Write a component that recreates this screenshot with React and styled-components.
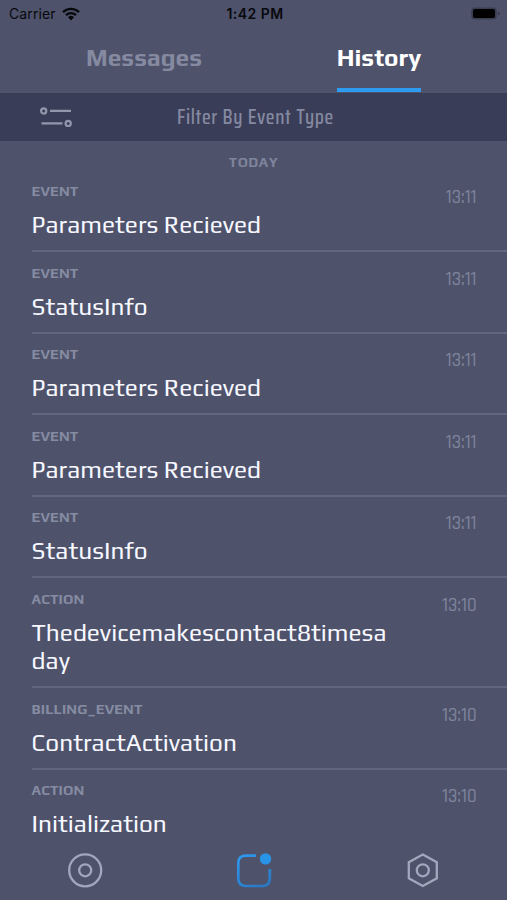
import React, {useState} from 'react';
import styled, {createGlobalStyle} from 'styled-components';

const GlobalStyle = createGlobalStyle`
  body {
    margin: 0;
    background: #4e526b;
  }
  * {
    box-sizing: border-box;
  }
`;

const Screen = styled.div`
  display: flex;
  flex-direction: column;
  height: 900px;
  overflow: hidden;
  background: #4e526b;
  color: #f7f8ff;
  font-family: Play, 'Noto Sans', sans-serif;
`;

const StatusBar = styled.div`
  display: grid;
  grid-template-columns: 1fr auto 1fr;
  align-items: center;
  flex: none;
  height: 28px;
  padding: 0 6px 0 9px;
  color: #08090d;
  font: 400 14px/28px Inter, sans-serif;
`;
const Carrier = styled.div`
  display: flex;
  align-items: center;
  gap: 6px;
  letter-spacing: 0.1px;
`;
const Clock = styled.div`
  font-weight: 600;
  letter-spacing: 0.45px;
`;
const Battery = styled.div`
  display: flex;
  justify-content: flex-end;
`;

const Tabs = styled.div`
  display: flex;
  flex: none;
  height: 65px;
  padding-left: 32px;
`;
const TabSlot = styled.div`
  display: flex;
  justify-content: center;
  width: ${(props) => props.$width}px;
`;
const Tab = styled.button`
  height: 64px;
  padding: 0 0 2px;
  border: 0;
  border-bottom: 4px solid ${(props) => (props.$active ? '#2d9cf0' : 'transparent')};
  background: none;
  color: ${(props) => (props.$active ? '#ffffff' : '#858aa1')};
  font: 700 24.4px/58px Play, 'Noto Sans', sans-serif;
  white-space: nowrap;
`;

const FilterBar = styled.div`
  display: grid;
  grid-template-columns: 1fr auto 1fr;
  align-items: center;
  flex: none;
  height: 48px;
  padding: 0 35px 0 39px;
  background: #3a3d57;
  color: #858aa1;
  font: 500 20.5px/47px 'Saira Condensed', Roboto, sans-serif;
  letter-spacing: 0.65px;
`;

const List = styled.div`
  flex: 1;
  min-height: 0;
  overflow: hidden;
`;
const Day = styled.div`
  height: 29.8px;
  padding-top: 11px;
  color: #7e849b;
  font-size: 14px;
  font-weight: 600;
  line-height: 20px;
  letter-spacing: 0.5px;
  text-align: center;
`;
const Row = styled.div`
  display: flex;
  justify-content: space-between;
  margin-left: 31.6px;
  padding: 10.6px 30.4px 11.4px 0;
  border-bottom: 2px solid #62677f;
`;
const Kind = styled.div`
  color: #858ba1;
  font-size: 14.3px;
  font-weight: 600;
  line-height: 20px;
  letter-spacing: 0.12px;
`;
const Title = styled.div`
  width: 362px;
  margin-top: 9px;
  font-size: 24.4px;
  line-height: 28.5px;
  white-space: pre-line;
`;
const Time = styled.div`
  padding-top: 6px;
  color: #7e849b;
  font: 500 18.6px/22px Rajdhani, Roboto, sans-serif;
`;

const Nav = styled.div`
  display: flex;
  justify-content: space-around;
  align-items: center;
  flex: none;
  height: 60px;
`;

const WifiIcon = () => (
  <svg width="18" height="14" viewBox="0 0 18 14" fill="none" stroke="#08090d" strokeWidth="2.3">
    <path d="M1 5.1a11.5 11.5 0 0 1 16 0" />
    <path d="M4 8.2a7.2 7.2 0 0 1 10 0" />
    <path d="M9 13.4 6 10.3a4.3 4.3 0 0 1 6 0z" fill="#08090d" stroke="none" />
  </svg>
);

const BatteryIcon = () => (
  <svg width="30" height="14" viewBox="0 0 30 14">
    <rect x=".2" y=".4" width="25.6" height="12.2" rx="3.5" fill="#3b3e51" />
    <rect x="2" y="2" width="22" height="9" rx="1.8" fill="#000" />
    <path d="M27 4.5v4q1.6-.5 1.6-2t-1.6-2z" fill="#343749" />
  </svg>
);

const FilterIcon = () => (
  <svg width="34" height="22" viewBox="0 0 34 22" fill="none" stroke="#9297ad" strokeWidth="2.2">
    <circle cx="4.7" cy="5" r="2.6" />
    <path d="M11 4.8h21M2.5 17.4h21" />
    <circle cx="29.2" cy="17.4" r="2.6" />
  </svg>
);

const TargetIcon = () => (
  <svg width="36" height="36" viewBox="0 0 36 36" fill="none" stroke="#a3a7bd" strokeWidth="2.3">
    <circle cx="18.2" cy="18.3" r="16" />
    <circle cx="18.2" cy="18.3" r="6" />
  </svg>
);

const InboxIcon = () => (
  <svg width="36" height="36" viewBox="0 0 36 36" fill="none">
    <defs>
      <linearGradient id="blue" x1="8" y1="2" x2="26" y2="36" gradientUnits="userSpaceOnUse">
        <stop stopColor="#2d98ed" />
        <stop offset="1" stopColor="#2979c5" />
      </linearGradient>
    </defs>
    <path
      d="M20 3.6H10Q2.3 3.6 2.3 10.7V26.2Q2.3 34 10 34H26.3Q33.8 34 33.8 26.2V17"
      stroke="url(#blue)"
      strokeWidth="2.7"
    />
    <circle cx="29.5" cy="6.9" r="5.7" fill="#2993e8" />
  </svg>
);

const HexIcon = () => (
  <svg width="36" height="36" viewBox="0 0 36 36" fill="none" stroke="#a3a7bd" strokeWidth="2.3">
    <path d="M17.8 2.6 31.8 10.3v16l-14 7.7-14-7.7v-16z" />
    <circle cx="17.8" cy="18.3" r="6" />
  </svg>
);

const events = [
  {kind: 'EVENT', title: 'Parameters Recieved', time: '13:11'},
  {kind: 'EVENT', title: 'StatusInfo', time: '13:11'},
  {kind: 'EVENT', title: 'Parameters Recieved', time: '13:11'},
  {kind: 'EVENT', title: 'Parameters Recieved', time: '13:11'},
  {kind: 'EVENT', title: 'StatusInfo', time: '13:11'},
  {kind: 'ACTION', title: 'Thedevicemakescontact8timesa\nday', time: '13:10'},
  {kind: 'BILLING_EVENT', title: 'ContractActivation', time: '13:10'},
  {kind: 'ACTION', title: 'Initialization', time: '13:10'},
];

const App = () => {
  const [tab, setTab] = useState('history');

  return (
    <Screen>
      <GlobalStyle />
      <StatusBar>
        <Carrier>
          Carrier <WifiIcon />
        </Carrier>
        <Clock>1:42 PM</Clock>
        <Battery>
          <BatteryIcon />
        </Battery>
      </StatusBar>
      <Tabs>
        <TabSlot $width={224}>
          <Tab $active={tab === 'messages'} onClick={() => setTab('messages')}>
            Messages
          </Tab>
        </TabSlot>
        <TabSlot $width={246}>
          <Tab $active={tab === 'history'} onClick={() => setTab('history')}>
            History
          </Tab>
        </TabSlot>
      </Tabs>
      <FilterBar>
        <FilterIcon />
        Filter By Event Type
      </FilterBar>
      <List>
        <Day>TODAY</Day>
        {events.map((event, i) => (
          <Row key={i}>
            <div>
              <Kind>{event.kind}</Kind>
              <Title>{event.title}</Title>
            </div>
            <Time>{event.time}</Time>
          </Row>
        ))}
      </List>
      <Nav>
        <TargetIcon />
        <InboxIcon />
        <HexIcon />
      </Nav>
    </Screen>
  );
};

export default App;
